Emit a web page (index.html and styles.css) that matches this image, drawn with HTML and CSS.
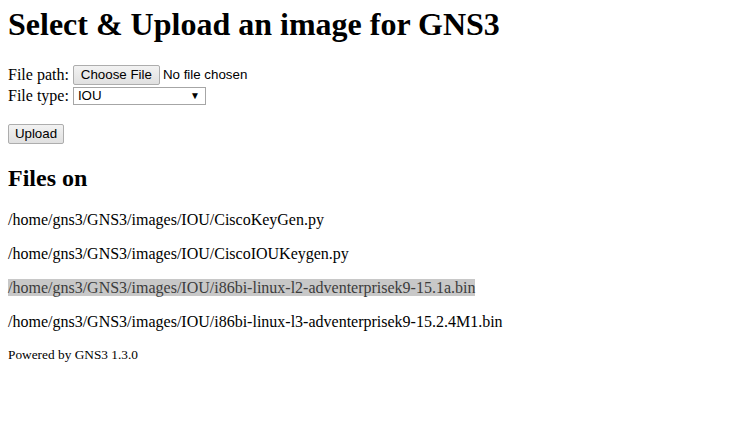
FILE: index.html
```html
<!DOCTYPE html>
<html>
<head>
<meta charset="utf-8">
<title>GNS3 image upload</title>
<link rel="stylesheet" href="styles.css">
</head>
<body>
<h1 class="title">Select &amp; Upload an image for GNS3</h1>
<form class="upload-form">
  <div class="row"><span class="label">File path:</span><span class="file-btn">Choose File</span><span class="file-name">No file chosen</span></div>
  <div class="row"><span class="label">File type:</span><span class="select"><span class="select-value">IOU</span><span class="select-arrow">&#9660;</span></span></div>
  <div class="row submit-row"><span class="btn">Upload</span></div>
</form>
<h2 class="subtitle">Files on</h2>
<p class="path">/home/gns3/GNS3/images/IOU/CiscoKeyGen.py</p>
<p class="path">/home/gns3/GNS3/images/IOU/CiscoIOUKeygen.py</p>
<p class="path"><span class="selected">/home/gns3/GNS3/images/IOU/i86bi-linux-l2-adventerprisek9-15.1a.bin</span></p>
<p class="path">/home/gns3/GNS3/images/IOU/i86bi-linux-l3-adventerprisek9-15.2.4M1.bin</p>
<p class="footer">Powered by GNS3 1.3.0</p>
</body>
</html>
```

FILE: styles.css
```css
html, body {
  background: #ffffff;
}
body {
  margin: 0;
  padding: 0 8px;
  font-family: "Liberation Serif", "Times New Roman", serif;
  font-size: 16px;
  color: #000;
}
.title {
  font-size: 32px;
  font-weight: bold;
  line-height: 37px;
  margin: 6px 0 21px 0;
}
.upload-form {
  margin: 0;
}
.row {
  line-height: 21px;
  height: 21px;
  display: flex;
  align-items: center;
  white-space: nowrap;
}
.label {
  margin-right: 4px;
}
.file-btn, .btn {
  display: inline-flex;
  align-items: center;
  justify-content: center;
  box-sizing: border-box;
  height: 20px;
  border: 1px solid #adadad;
  border-radius: 2px;
  background: linear-gradient(#f2f2f2, #e0e0e0);
  font-family: "Liberation Sans", Arial, sans-serif;
  font-size: 13.33px;
  color: #000;
}
.file-btn {
  width: 87px;
}
.file-name {
  margin-left: 3px;
  font-family: "Liberation Sans", Arial, sans-serif;
  font-size: 13.33px;
}
.select {
  display: inline-flex;
  align-items: center;
  justify-content: space-between;
  box-sizing: border-box;
  width: 133px;
  height: 18px;
  border: 1px solid #a6a6a6;
  background: #fff;
  padding: 0 5px 0 4px;
  font-family: "Liberation Sans", Arial, sans-serif;
  font-size: 13.33px;
}
.select-arrow {
  font-size: 10px;
  line-height: 1;
}
.submit-row {
  margin-top: 17px;
}
.btn {
  width: 56px;
}
.subtitle {
  font-size: 24px;
  font-weight: bold;
  line-height: 28px;
  margin: 20px 0 19px 0;
}
.path {
  margin: 16px 0;
  line-height: 18px;
}
.selected {
  background: #c8c8c8;
  color: #3c3c3c;
}
.footer {
  font-size: 13.33px;
  line-height: 15px;
  margin: 16px 0;
}
```
